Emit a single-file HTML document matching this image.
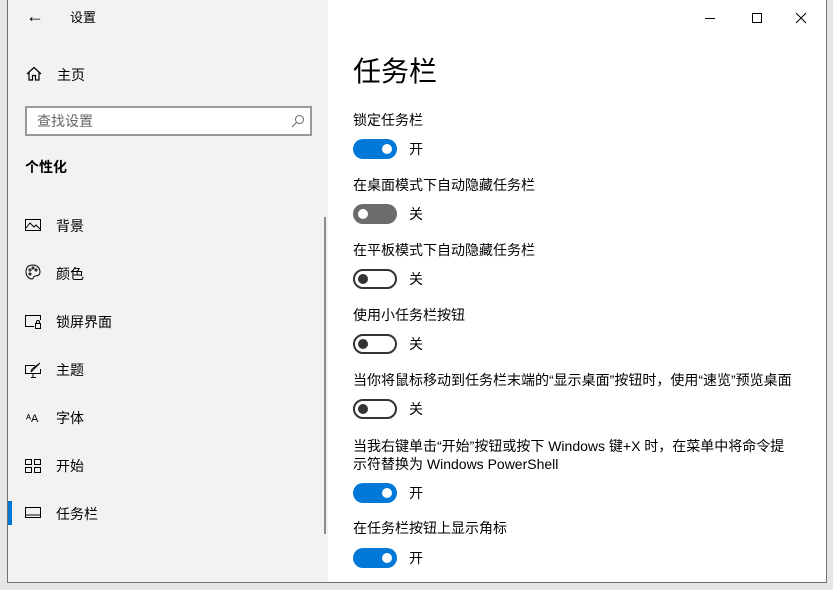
<!DOCTYPE html>
<html><head><meta charset="utf-8"><style>
*{margin:0;padding:0;box-sizing:border-box}
body{width:833px;height:590px;overflow:hidden;background:#e6e6e6;font-family:"Liberation Sans","Noto Sans CJK SC",sans-serif;color:#000;position:relative}
.win{position:absolute;left:7px;top:-1px;width:820px;height:584px;border:1px solid #6f6f6f;background:#fff}
.left{position:absolute;left:0;top:0;width:320px;height:582px;background:#f2f2f2}
.a{position:absolute;white-space:nowrap;font-size:14px;line-height:18px}
.tg{position:absolute;left:345px;width:44px;height:20px;border-radius:10px}
.on{background:#0078d7}
.on::after{content:"";position:absolute;right:5px;top:5px;width:10px;height:10px;border-radius:50%;background:#fff}
.offg{background:#6b6b6b}
.offg::after{content:"";position:absolute;left:5px;top:5px;width:10px;height:10px;border-radius:50%;background:#fff}
.off{border:2px solid #333;background:#fff}
.off::after{content:"";position:absolute;left:3px;top:3px;width:10px;height:10px;border-radius:50%;background:#333}
.nav{left:48px}
svg{position:absolute}
</style></head><body>
<div class="win">
<div class="left"></div>
<div class="a" style="left:18px;top:7px;font-size:18px">&#8592;</div>
<div class="a" style="left:62px;top:9px;font-size:13px">设置</div>
<svg style="left:18px;top:66px" width="16" height="16" viewBox="0 0 16 16" fill="none" stroke="#000" stroke-width="1.2"><path d="M1 8 L8 1.5 L15 8 M3 6.5 V14 H6.5 V9.5 H9.5 V14 H13 V6.5"/></svg>
<div class="a" style="left:49px;top:66px">主页</div>
<div style="position:absolute;left:17px;top:106px;width:287px;height:30px;border:2px solid #999;background:#fff"></div>
<div class="a" style="left:29px;top:112px;color:#666">查找设置</div>
<svg style="left:283px;top:114px" width="14" height="14" viewBox="0 0 14 14" fill="none" stroke="#666" stroke-width="1"><circle cx="8.5" cy="5.5" r="4"/><path d="M5.5 8.5 L1 13"/></svg>
<div class="a" style="left:17px;top:158px;font-weight:bold">个性化</div>
<svg style="left:17px;top:219px" width="16" height="14" viewBox="0 0 16 14" fill="none" stroke="#000" stroke-width="1"><rect x="0.5" y="0.5" width="15" height="11"/><path d="M1 9 L5 4 L9 8 L11 6 L15 10"/></svg>
<div class="a nav" style="top:217px">背景</div>
<svg style="left:17px;top:264px" width="16" height="16" viewBox="0 0 16 16" fill="none" stroke="#000" stroke-width="1"><path d="M8 1 C3 1 1 4 1 8 C1 12 4 15 7 15 C9 15 8 12 10 12 C13 12 15 11 15 8 C15 4 12 1 8 1Z"/><circle cx="5" cy="6" r="1"/><circle cx="8" cy="4" r="1"/><circle cx="11" cy="6" r="1"/><circle cx="5" cy="10" r="1"/></svg>
<div class="a nav" style="top:265px">颜色</div>
<svg style="left:17px;top:315px" width="16" height="14" viewBox="0 0 16 14" fill="none" stroke="#000" stroke-width="1"><path d="M9 11.5 H0.5 V0.5 H15.5 V5"/><rect x="10.5" y="8.5" width="5" height="5"/><path d="M11.5 8.5 V7 A1.5 1.5 0 0 1 14.5 7 V8.5"/></svg>
<div class="a nav" style="top:313px">锁屏界面</div>
<svg style="left:17px;top:362px" width="16" height="16" viewBox="0 0 16 16" fill="none" stroke="#000" stroke-width="1"><path d="M10 3.5 H0.5 V11.5 H15.5 V7"/><path d="M6 15.5 H11 M8 11.5 V15.5"/><path d="M15 1 L8 8 L6 10 L7 7 Z"/></svg>
<div class="a nav" style="top:361px">主题</div>
<div class="a" style="left:18px;top:410px;font-size:11px">ᴬA</div>
<div class="a nav" style="top:409px">字体</div>
<svg style="left:17px;top:459px" width="16" height="14" viewBox="0 0 16 14" fill="none" stroke="#000" stroke-width="1"><rect x="0.5" y="0.5" width="6" height="5"/><rect x="9.5" y="0.5" width="6" height="5"/><rect x="0.5" y="8.5" width="6" height="5"/><rect x="9.5" y="8.5" width="6" height="5"/></svg>
<div class="a nav" style="top:457px">开始</div>
<div style="position:absolute;left:0;top:501px;width:4px;height:24px;background:#0078d7"></div>
<svg style="left:17px;top:507px" width="16" height="12" viewBox="0 0 16 12" fill="none" stroke="#000" stroke-width="1"><rect x="0.5" y="0.5" width="15" height="10"/><path d="M0.5 8 H15.5"/></svg>
<div class="a nav" style="top:505px">任务栏</div>
<div style="position:absolute;left:316px;top:217px;width:2px;height:317px;background:#8a8a8a"></div>

<svg style="left:697px;top:10px" width="110" height="16" viewBox="0 0 110 16" fill="none" stroke="#000" stroke-width="1"><path d="M0 8.5 H10"/><rect x="47.5" y="3.5" width="9" height="9"/><path d="M91 3 L101 13 M101 3 L91 13"/></svg>

<div class="a" style="left:345px;top:53px;font-size:28px;line-height:38px">任务栏</div>
<div class="a" style="left:345px;top:111px">锁定任务栏</div>
<div class="tg on" style="top:139px"></div><div class="a" style="left:401px;top:140px">开</div>
<div class="a" style="left:345px;top:176px">在桌面模式下自动隐藏任务栏</div>
<div class="tg offg" style="top:204px"></div><div class="a" style="left:401px;top:205px">关</div>
<div class="a" style="left:345px;top:241px">在平板模式下自动隐藏任务栏</div>
<div class="tg off" style="top:269px"></div><div class="a" style="left:401px;top:270px">关</div>
<div class="a" style="left:345px;top:306px">使用小任务栏按钮</div>
<div class="tg off" style="top:334px"></div><div class="a" style="left:401px;top:335px">关</div>
<div class="a" style="left:345px;top:371px">当你将鼠标移动到任务栏末端的“显示桌面”按钮时，使用“速览”预览桌面</div>
<div class="tg off" style="top:399px"></div><div class="a" style="left:401px;top:400px">关</div>
<div class="a" style="left:345px;top:437px">当我右键单击“开始”按钮或按下 Windows 键+X 时，在菜单中将命令提</div>
<div class="a" style="left:345px;top:455px">示符替换为 Windows PowerShell</div>
<div class="tg on" style="top:483px"></div><div class="a" style="left:401px;top:484px">开</div>
<div class="a" style="left:345px;top:519px">在任务栏按钮上显示角标</div>
<div class="tg on" style="top:548px"></div><div class="a" style="left:401px;top:549px">开</div>
</div>
</body></html>
